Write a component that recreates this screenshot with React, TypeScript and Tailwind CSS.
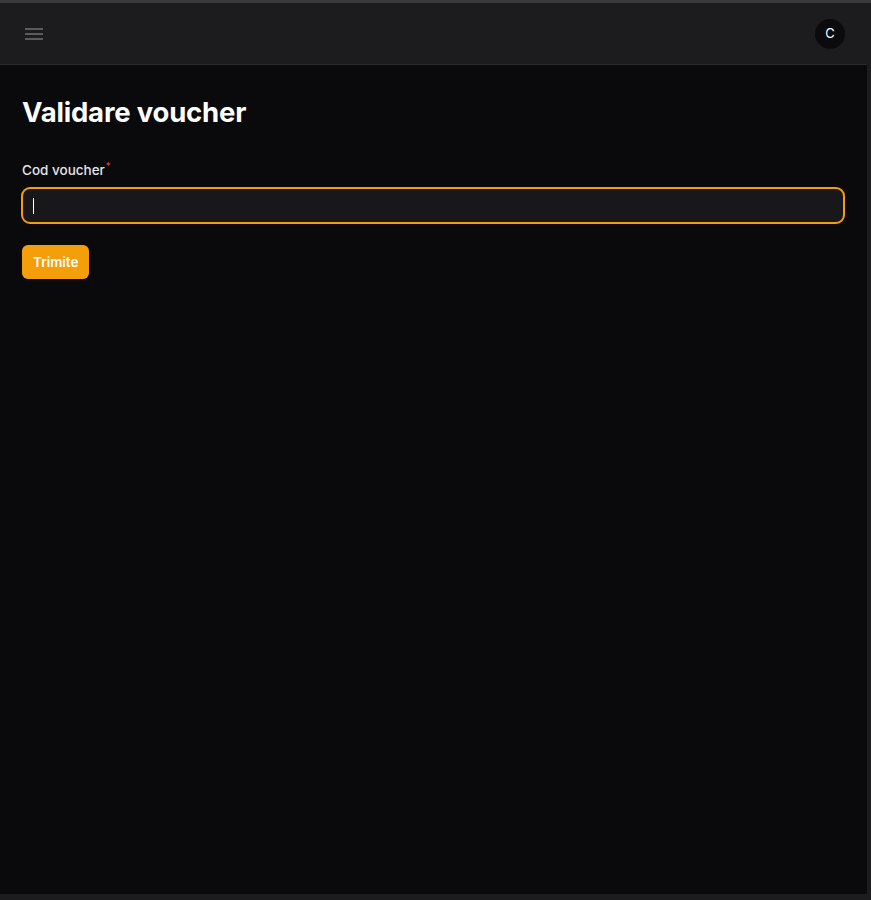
export default function App() {
  return (
    <div
      className="w-[871px] h-[900px] flex flex-col bg-[#0a0a0c] overflow-hidden"
      style={{ fontFamily: "Inter, 'Liberation Sans', sans-serif" }}
    >
      <div className="h-[3px] bg-[#3a3a3c] shrink-0" />
      <div className="flex flex-1 min-h-0">
        <div className="flex-1 flex flex-col min-w-0">
          {/* header */}
          <header className="h-[62px] shrink-0 flex items-center justify-between pl-[25px] pr-6 bg-[#1c1c1e] border-b border-[#2a2a2c]">
            <svg width="18" height="12" viewBox="0 0 18 12" className="text-[#707075]">
              <path d="M0 1h18M0 6h18M0 11h18" stroke="currentColor" strokeWidth="1.5" />
            </svg>
            <div className="w-[30px] h-[30px] rounded-full bg-[#0b0b0d] flex items-center justify-center text-white text-[13px] mr-[-2px]">
              C
            </div>
          </header>

          <main className="flex-1 px-[22px] pt-[29px]">
            <h1 className="text-[27.5px] leading-9 font-bold text-white tracking-[-0.2px]">
              Validare voucher
            </h1>

            <div className="mt-[30px]">
              <label className="text-[13.5px] font-medium text-[#e4e4e7] flex items-start">
                Cod voucher
                <span className="text-[#ef4444] text-[9px] leading-none ml-[1px] mt-[1px]">*</span>
              </label>
              <div className="mt-[7px] ml-[-1px] h-[37px] rounded-[9px] border-2 border-[#f59e0b] bg-[#18181b] flex items-center px-[10px]">
                <div className="w-[1px] h-[16px] bg-white" />
              </div>
            </div>

            <button className="mt-[21px] h-[34px] px-[11px] rounded-[6px] bg-[#f59e0b] text-white text-[13.5px] font-semibold">
              Trimite
            </button>
          </main>
        </div>
        <div className="w-[4px] bg-[#1c1c1e] shrink-0" />
      </div>
      <div className="h-[6px] bg-[#1c1c1e] shrink-0" />
    </div>
  );
}
